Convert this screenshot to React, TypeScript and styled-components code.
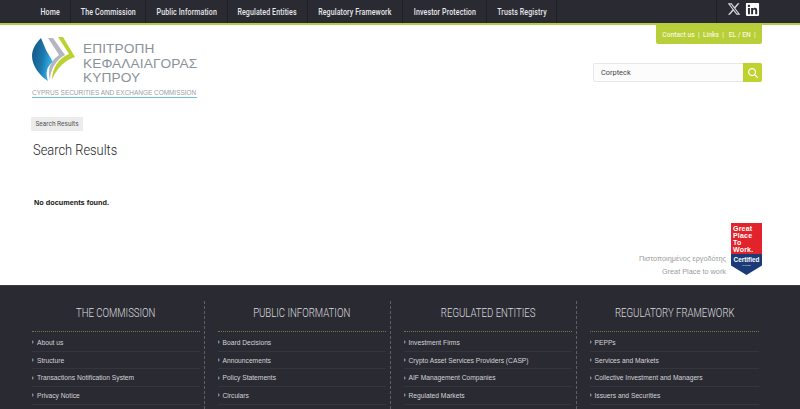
import React from 'react';
import styled, {createGlobalStyle} from 'styled-components';
import {FaLinkedin, FaMagnifyingGlass, FaXTwitter} from 'react-icons/fa6';

const GlobalStyle = createGlobalStyle`
  html, body {
    margin: 0;
    padding: 0;
    background: #fff;
    overflow: hidden;
  }
  body {
    font-family: "Liberation Sans", Arial, sans-serif;
  }
  * {
    box-sizing: border-box;
  }
`;

const Page = styled.div`
  width: 800px;
  height: 409px;
  overflow: hidden;
  display: flex;
  flex-direction: column;
`;

// the original uses Roboto Condensed, which is not installed
const Condensed = styled.span`
  display: inline-block;
  flex: none;
  transform: scaleX(0.8);
  white-space: nowrap;
`;

const TopBar = styled.nav`
  height: 25px;
  flex: none;
  display: flex;
  justify-content: space-between;
  background: #2a2a33;
  border-bottom: 2px solid #b4cb42;
  padding-left: 30px;
  padding-right: 38px;
`;

const NavList = styled.div`
  display: flex;
`;

const NavItem = styled.a<{$width: number}>`
  width: ${p => p.$width}px;
  height: 23px;
  display: flex;
  align-items: center;
  justify-content: center;
  font-family: Roboto, sans-serif;
  font-size: 8.8px;
  font-weight: 500;
  letter-spacing: 0.15px;
  color: #e8e8ea;
  border-right: 1px solid #1f1f26;
`;

const Social = styled.div`
  display: flex;
  align-items: flex-start;
  gap: 4px;
  height: 23px;
  padding: 2px 2px 0 10px;
  border-left: 1px solid #1f1f26;
  color: #fff;
  font-size: 15px;
  line-height: 15px;
`;

const XIcon = styled(FaXTwitter)`
  width: 14px;
  height: 14px;
  color: #d6d6da;
`;

const Header = styled.header`
  height: 92px;
  flex: none;
  display: flex;
  justify-content: space-between;
  padding-left: 32px;
  padding-right: 38px;
`;

const Logo = styled.div`
  width: 165px;
  padding-top: 11px;
`;

const LogoRow = styled.div`
  display: flex;
  gap: 5px;
`;

const LogoMark = styled.svg`
  width: 46px;
  height: 46px;
  flex: none;
`;

const LogoWords = styled.div`
  padding-top: 6px;
  font-family: "Liberation Sans", sans-serif;
  font-size: 13.7px;
  line-height: 14.6px;
  color: #8a9299;
  letter-spacing: 0.1px;
  white-space: nowrap;
`;

const LogoCaption = styled.div`
  margin-top: 3px;
  padding-bottom: 1px;
  border-bottom: 1px solid #6fbfe0;
  font-size: 6.45px;
  line-height: 7px;
  color: #9aa0a5;
  white-space: nowrap;
`;

const HeaderRight = styled.div`
  width: 169px;
  display: flex;
  flex-direction: column;
  align-items: flex-end;
`;

const ContactTab = styled.div`
  width: 106px;
  height: 19px;
  display: flex;
  align-items: center;
  justify-content: center;
  background: #b9cf3a;
  border-radius: 0 0 2px 2px;
  font-family: Roboto, sans-serif;
  font-size: 6.7px;
  font-weight: 500;
  color: #f4f7dc;
  white-space: pre;
`;

const SearchBox = styled.div`
  width: 169px;
  height: 19px;
  margin-top: 19px;
  display: flex;
  border: 1px solid #e6e8e8;
  border-radius: 2px;
  background: #fcfcfc;
`;

const SearchText = styled.div`
  flex: 1;
  padding-left: 7px;
  font-family: Roboto, sans-serif;
  font-size: 7.4px;
  line-height: 17px;
  color: #444;
`;

const SearchButton = styled.div`
  width: 19px;
  margin: -1px -1px -1px 0;
  display: flex;
  align-items: center;
  justify-content: center;
  background: #bfd230;
  border-radius: 0 2px 2px 0;
  color: #fff;
  font-size: 10px;
`;

const Main = styled.main`
  flex: 1;
  display: flex;
  flex-direction: column;
  padding-left: 31px;
  padding-right: 38px;
`;

const Crumb = styled.div`
  align-self: flex-start;
  height: 14px;
  padding: 0 4.5px;
  background: #ececec;
  font-family: Roboto, sans-serif;
  font-size: 6.5px;
  line-height: 14px;
  color: #555;
`;

const Title = styled.h1`
  margin: 10px 0 0 2px;
  font-family: Roboto, sans-serif;
  font-size: 15.5px;
  line-height: 18px;
  font-weight: 300;
  color: #222;

  ${Condensed} {
    transform-origin: left center;
    transform: scaleX(0.83);
  }
`;

const Empty = styled.p`
  margin: 39px 0 0 3px;
  font-size: 7.3px;
  line-height: 10px;
  font-weight: 700;
  color: #111;
`;

const Certified = styled.div`
  margin-top: 15px;
  display: flex;
  justify-content: flex-end;
  align-items: flex-end;
  gap: 5px;
`;

const CertifiedText = styled.div`
  font-size: 7.3px;
  line-height: 12.5px;
  color: #9a9c9e;
  text-align: right;
  margin-bottom: -3px;
`;

const Badge = styled.div`
  width: 31px;
  height: 52px;
  display: flex;
  flex-direction: column;
  font-family: "Liberation Sans", sans-serif;
  color: #fff;
`;

const BadgeRed = styled.div`
  height: 31px;
  padding: 2px 0 0 2px;
  background: #e3232b;
  font-size: 7px;
  line-height: 7px;
  letter-spacing: 0.2px;
  font-weight: 700;
`;

const BadgeBlue = styled.div`
  flex: 1;
  background: #1b3a78;
  clip-path: polygon(0 0, 100% 0, 100% 55%, 50% 100%, 0 55%);
  text-align: center;
  font-size: 6.4px;
  line-height: 8px;
  font-weight: 700;
  padding-top: 2px;
`;

const BadgeNote = styled.div`
  font-size: 2px;
  line-height: 3px;
  font-weight: 400;
`;

const Footer = styled.footer`
  height: 124px;
  flex: none;
  display: grid;
  grid-template-columns: 187px 186px 186px 186px;
  padding: 15px 0 0 18px;
  background: #2a2a33;
  border-top: 1px solid #3a3a42;
`;

const FooterColumn = styled.section<{$first?: boolean; $last?: boolean}>`
  padding: 0 4px 0 ${p => (p.$first ? '14px' : '12.5px')};
  border-right: ${p => (p.$last ? 'none' : '1px dashed #5f5f66')};
`;

const FooterTitle = styled.h3`
  margin: 0;
  height: 16px;
  padding-top: 4px;
  display: flex;
  justify-content: center;
  font-family: Roboto, sans-serif;
  font-size: 12px;
  line-height: 16px;
  font-weight: 300;
  color: #dcdcde;
  box-sizing: content-box;
`;

const FooterRule = styled.div`
  margin-top: 10px;
  border-top: 1px dotted #73784a;
`;

const FooterList = styled.ul`
  margin: 0;
  padding: 2px 0 0;
  list-style: none;
`;

const FooterLink = styled.li`
  display: flex;
  align-items: center;
  gap: 2px;
  height: 17.7px;
  font-size: 6.7px;
  color: #d4d4d7;
  border-bottom: 1px solid #35353e;
  white-space: nowrap;

  &::before {
    content: '';
    border-left: 2px solid #85858b;
    border-top: 2px solid transparent;
    border-bottom: 2px solid transparent;
    margin-right: 1px;
  }
`;

const NAV = [
  {label: 'Home', width: 41},
  {label: 'The Commission', width: 75},
  {label: 'Public Information', width: 82},
  {label: 'Regulated Entities', width: 80},
  {label: 'Regulatory Framework', width: 95},
  {label: 'Investor Protection', width: 84},
  {label: 'Trusts Registry', width: 70}
];

const COLUMNS = [
  {
    title: 'THE COMMISSION',
    links: ['About us', 'Structure', 'Transactions Notification System', 'Privacy Notice']
  },
  {
    title: 'PUBLIC INFORMATION',
    links: ['Board Decisions', 'Announcements', 'Policy Statements', 'Circulars']
  },
  {
    title: 'REGULATED ENTITIES',
    links: [
      'Investment Firms',
      'Crypto Asset Services Providers (CASP)',
      'AIF Management Companies',
      'Regulated Markets'
    ]
  },
  {
    title: 'REGULATORY FRAMEWORK',
    links: [
      'PEPPs',
      'Services and Markets',
      'Collective Investment and Managers',
      'Issuers and Securities'
    ]
  }
];

const CysecMark = () => (
  <LogoMark viewBox="0 0 46 46">
    <defs>
      <linearGradient id="cysec-blue" x1="0" y1="0" x2="1" y2="0.4">
        <stop offset="0" stopColor="#15527f" />
        <stop offset="0.6" stopColor="#1b78ad" />
        <stop offset="1" stopColor="#38b3e6" />
      </linearGradient>
    </defs>
    <path d="M9 2 C3 8 0 14 0 20 C0 30 8 40 16 45 C13 36 15 30 21 26 L14 14 Z" fill="url(#cysec-blue)" />
    <path d="M16 2 L21 2 L33 19 C24 24 18 34 18 44 C15 34 18 25 27 19 Z" fill="#b4b7c2" />
    <path d="M26 1 L31 1 L43 21 C33 24 24 33 20 44 C20 32 27 22 37 18 Z" fill="#bcd233" />
  </LogoMark>
);

export default function App() {
  return (
    <Page>
      <GlobalStyle />
      <TopBar>
        <NavList>
          {NAV.map(item => (
            <NavItem key={item.label} $width={item.width}>
              <Condensed>{item.label}</Condensed>
            </NavItem>
          ))}
        </NavList>
        <Social>
          <XIcon />
          <FaLinkedin />
        </Social>
      </TopBar>
      <Header>
        <Logo>
          <LogoRow>
            <CysecMark />
            <LogoWords>
              ΕΠΙΤΡΟΠΗ
              <br />
              ΚΕΦΑΛΑΙΑΓΟΡΑΣ
              <br />
              ΚΥΠΡΟΥ
            </LogoWords>
          </LogoRow>
          <LogoCaption>CYPRUS SECURITIES AND EXCHANGE COMMISSION</LogoCaption>
        </Logo>
        <HeaderRight>
          <ContactTab>{'Contact us  |  Links  |   EL / EN  |'}</ContactTab>
          <SearchBox>
            <SearchText>Corpteck</SearchText>
            <SearchButton>
              <FaMagnifyingGlass />
            </SearchButton>
          </SearchBox>
        </HeaderRight>
      </Header>
      <Main>
        <Crumb>Search Results</Crumb>
        <Title>
          <Condensed>Search Results</Condensed>
        </Title>
        <Empty>No documents found.</Empty>
        <Certified>
          <CertifiedText>
            Πιστοποιημένος εργοδότης
            <br />
            Great Place to work
          </CertifiedText>
          <Badge>
            <BadgeRed>
              Great
              <br />
              Place
              <br />
              To
              <br />
              Work.
            </BadgeRed>
            <BadgeBlue>
              Certified
              <BadgeNote>CYPRUS</BadgeNote>
            </BadgeBlue>
          </Badge>
        </Certified>
      </Main>
      <Footer>
        {COLUMNS.map((col, i) => (
          <FooterColumn key={col.title} $first={i === 0} $last={i === COLUMNS.length - 1}>
            <FooterTitle>
              <Condensed>{col.title}</Condensed>
            </FooterTitle>
            <FooterRule />
            <FooterList>
              {col.links.map(link => (
                <FooterLink key={link}>{link}</FooterLink>
              ))}
            </FooterList>
          </FooterColumn>
        ))}
      </Footer>
    </Page>
  );
}
